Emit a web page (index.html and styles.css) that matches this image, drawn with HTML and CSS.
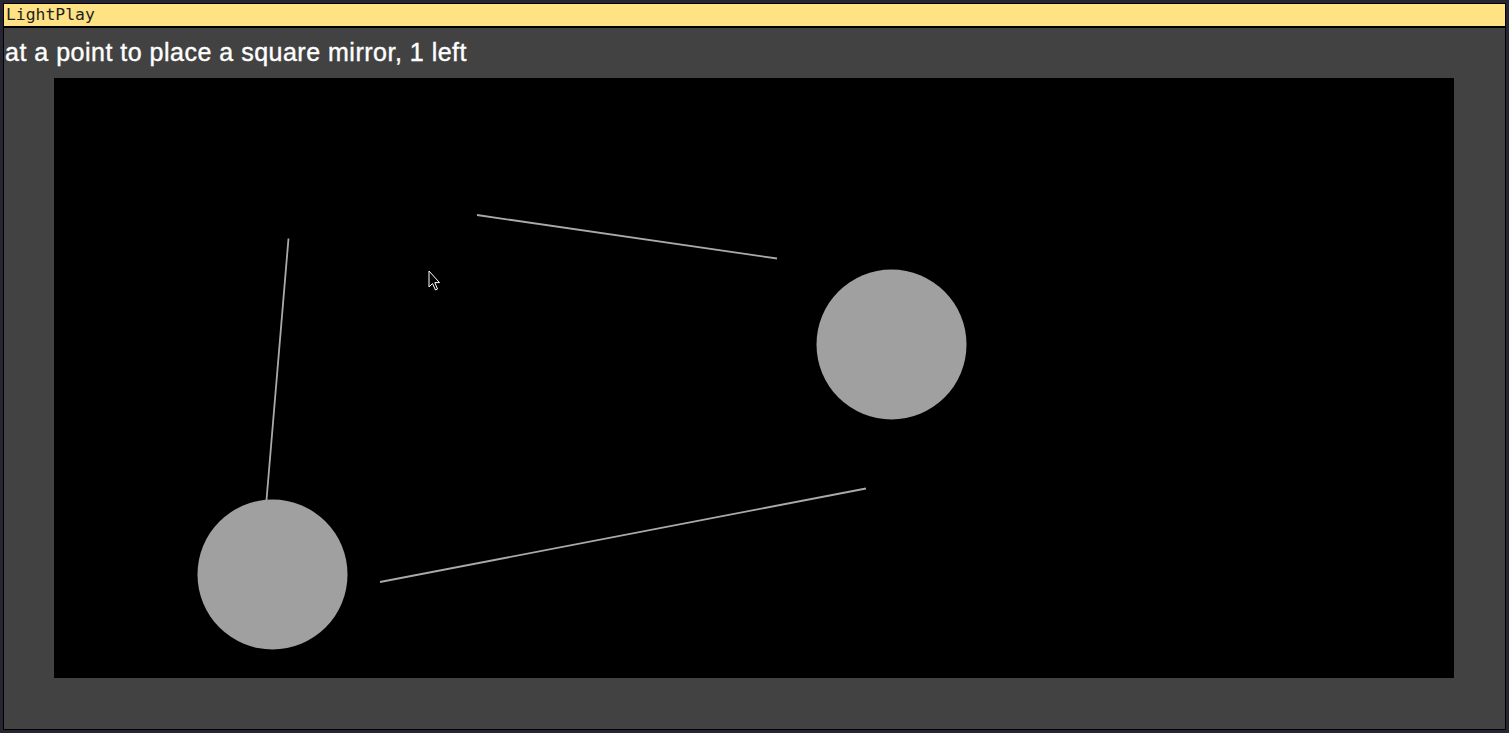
FILE: index.html
```html
<!DOCTYPE html>
<html>
<head>
<meta charset="utf-8">
<title>LightPlay</title>
<link rel="stylesheet" href="styles.css">
</head>
<body>
<div class="window">
  <div class="titlebar">LightPlay</div>
  <div class="content">
    <div class="prompt">at a point to place a square mirror, 1 left</div>
    <div class="stage">
      <svg class="board" width="1400" height="600" viewBox="0 0 1400 600">
        <rect width="1400" height="600" fill="#000"/>
        <line x1="234.5" y1="160.5" x2="212.5" y2="422" stroke="#aaaaaa" stroke-width="1.8"/>
        <line x1="423" y1="137" x2="723" y2="180.5" stroke="#aaaaaa" stroke-width="1.8"/>
        <line x1="326" y1="504" x2="812" y2="410.5" stroke="#aaaaaa" stroke-width="1.8"/>
        <circle cx="837.5" cy="266.5" r="75" fill="#a0a0a0"/>
        <circle cx="218.5" cy="496.5" r="75" fill="#a0a0a0"/>
      </svg>
      <svg class="cursor" width="14" height="22" viewBox="0 0 14 22">
        <path d="M1 1 L1 17 L4.5 13.5 L7.5 20 L9.5 19 L6.8 12.6 L11.5 12.6 Z" fill="#000" stroke="#fff" stroke-width="1"/>
      </svg>
    </div>
  </div>
</div>
</body>
</html>
```

FILE: styles.css
```css
html, body {
  margin: 0;
  padding: 0;
  background: #262633;
  width: 1509px;
  height: 733px;
  overflow: hidden;
}

.window {
  box-sizing: border-box;
  margin: 3px;
  width: 1503px;
  height: 727px;
  border: 1px solid #000;
  display: flex;
  flex-direction: column;
  background: #424242;
}

.titlebar {
  box-sizing: border-box;
  height: 24px;
  background: #ffe283;
  border-bottom: 2px solid #000;
  color: #1e1e1e;
  font-family: "DejaVu Sans Mono", "Liberation Mono", monospace;
  font-size: 16.4px;
  line-height: 22px;
  padding-left: 2px;
}

.content {
  flex: 1;
  display: flex;
  flex-direction: column;
}

.prompt {
  height: 50px;
  box-sizing: border-box;
  color: #fff;
  font-family: "Liberation Sans", Arial, sans-serif;
  font-size: 25px;
  letter-spacing: 0.5px;
  -webkit-text-stroke: 0.4px #fff;
  line-height: 48px;
  padding-left: 1px;
}

.stage {
  position: relative;
  margin-left: 50px;
  width: 1400px;
  height: 600px;
}

.board {
  display: block;
}

.cursor {
  position: absolute;
  left: 374px;
  top: 192px;
}
```
